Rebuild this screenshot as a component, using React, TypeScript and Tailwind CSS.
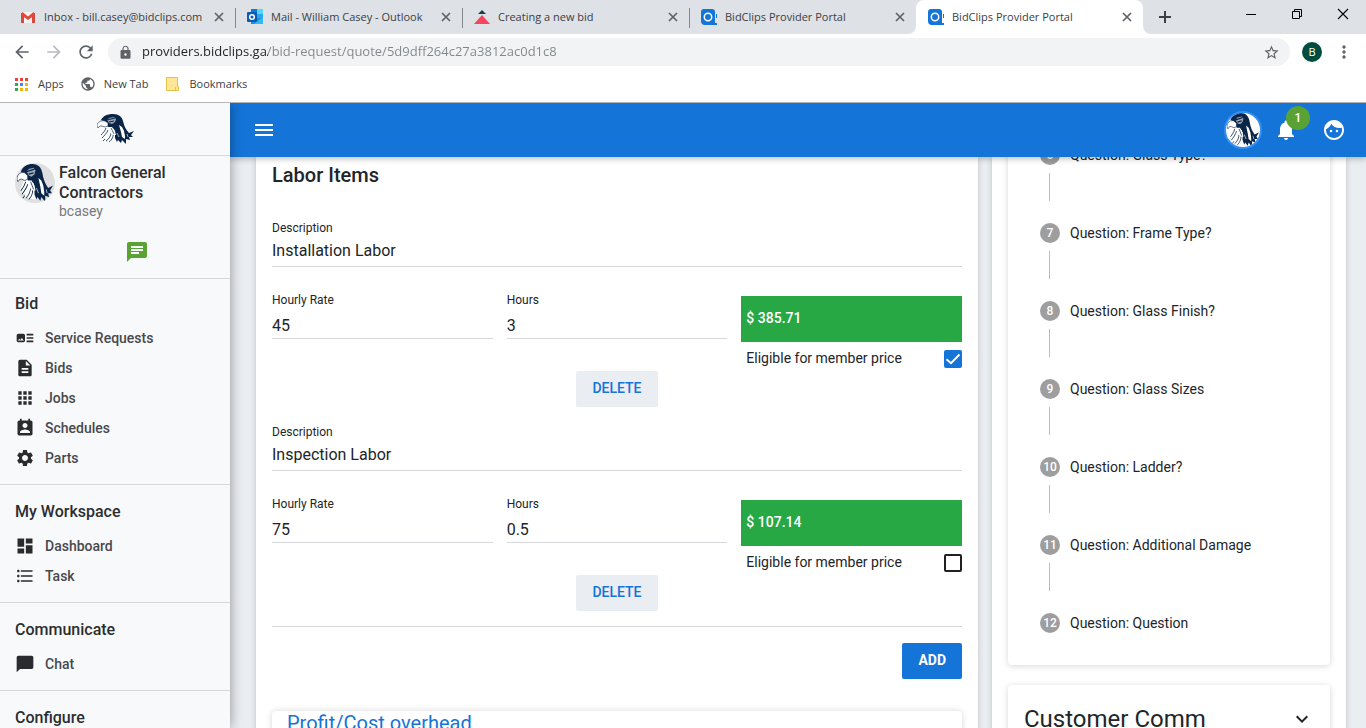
import { useState, type ReactNode } from "react";
import type { IconType } from "react-icons";
import {
  MdApps,
  MdArrowBack,
  MdArrowForward,
  MdArtTrack,
  MdChat,
  MdChatBubble,
  MdDashboard,
  MdDescription,
  MdFace,
  MdFormatListBulleted,
  MdKeyboardArrowDown,
  MdLock,
  MdMenu,
  MdMoreVert,
  MdNotifications,
  MdPermContactCalendar,
  MdPublic,
  MdRefresh,
  MdSettings,
  MdStarBorder,
} from "react-icons/md";

const sections: { title: string; items: { label: string; icon: IconType }[] }[] = [
  {
    title: "Bid",
    items: [
      { label: "Service Requests", icon: MdArtTrack },
      { label: "Bids", icon: MdDescription },
      { label: "Jobs", icon: MdApps },
      { label: "Schedules", icon: MdPermContactCalendar },
      { label: "Parts", icon: MdSettings },
    ],
  },
  {
    title: "My Workspace",
    items: [
      { label: "Dashboard", icon: MdDashboard },
      { label: "Task", icon: MdFormatListBulleted },
    ],
  },
  { title: "Communicate", items: [{ label: "Chat", icon: MdChatBubble }] },
  { title: "Configure", items: [] },
];

const steps = [
  { n: 6, label: "Question: Glass Type?" },
  { n: 7, label: "Question: Frame Type?" },
  { n: 8, label: "Question: Glass Finish?" },
  { n: 9, label: "Question: Glass Sizes" },
  { n: 10, label: "Question: Ladder?" },
  { n: 11, label: "Question: Additional Damage" },
  { n: 12, label: "Question: Question" },
];

const laborItems = [
  { description: "Installation Labor", rate: "45", hours: "3", total: "$ 385.71", eligible: true },
  { description: "Inspection Labor", rate: "75", hours: "0.5", total: "$ 107.14", eligible: false },
];

function Falcon({ className }: { className: string }) {
  return (
    <svg viewBox="0 0 37 30" preserveAspectRatio="none" className={className} aria-hidden="true">
      {/* breast feathers */}
      <path d="M7 13 12 12 19 15 21 27 17 28 14 27 12 29 11 26 7 27 9 23 4 24 6 20 3 20 6 16Z" fill="#fff" />
      <path
        d="M9 14C8 17 6 19 4 21M11 16C10 19 7 22 5 24M9 27C12 25 14 22 14 18M12 28C15 26 17 22 16 18M8 25 6 27"
        fill="none"
        stroke="#0a2548"
        strokeWidth="0.8"
      />
      {/* head, nape and back */}
      <path
        d="M4 6C6 2 10 0 16 0 22 0 25 3 26 7 27 12 29 16 32 19L37 17 34 21 36 23 32 23 33 26 29 25 29 30 25 26 24 29 21 26 20 28 18 24 18 19 17 15 12 14 10 11 8 8Z"
        fill="#0a2548"
      />
      {/* beak */}
      <path
        d="M0 12C0 8 4 6 8 7L11 9 11 12 8 13 5 12 3 12 1 14Z"
        fill="#fff"
        stroke="#0a2548"
        strokeWidth="0.6"
      />
      {/* cheek */}
      <path d="M11 13 15 13 18 17 19 21 16 21 12 18Z" fill="#fff" />
      <path d="M14 14 17 20" stroke="#0a2548" strokeWidth="0.7" />
      {/* eye patch */}
      <path d="M10 6 12 4 17 3 19 5 18 8 15 10 12 9Z" fill="#9aa8b6" />
      <path d="M10 6 18 4M12 8 17 7" stroke="#0a2548" strokeWidth="1.1" />
      {/* wing stripe */}
      <path d="M22 11 25 13 27 17 28 22 28 25 25 23 24 18Z" fill="#fff" />
      <path d="M30 20 31 23M20 19 22 23" stroke="#fff" strokeWidth="0.6" />
    </svg>
  );
}

function GmailIcon() {
  return (
    <svg viewBox="0 0 16 16" className="size-4" aria-hidden="true">
      <path d="M1 3h14v11H1z" fill="#f2f2f2" />
      <path d="M1 14V4l3 2v8zM12 14V6l3-2v10z" fill="#d54b3d" />
      <path d="M1 4.500 2.500 3 8 7.500 13.500 3 15 4.500V6L8 11 1 6z" fill="#e0493b" />
    </svg>
  );
}

function OutlookIcon() {
  return (
    <svg viewBox="0 0 16 16" className="size-4" aria-hidden="true">
      <path d="M4 0h12v13H4z" fill="#28a8ea" />
      <path d="M10 0h6v5h-6z" fill="#50d9ff" />
      <path d="M4 0h6v5H4z" fill="#0f78d4" />
      <path d="M4 9h12v6H4z" fill="#1490df" />
      <path d="M16 8v7H7z" fill="#35b8f1" />
      <rect y="3" width="10" height="10" rx="1" fill="#0a5cb2" />
      <circle cx="5" cy="8" r="2.300" fill="none" stroke="#fff" strokeWidth="1.500" />
    </svg>
  );
}

function TriangleIcon() {
  return (
    <svg viewBox="0 0 16 16" className="size-4" aria-hidden="true">
      <path d="M8 1 12 5H4z" fill="#173f4a" />
      <path d="M8 6 16 15H0z" fill="#f4465e" />
    </svg>
  );
}

function BidClipsIcon() {
  return (
    <svg viewBox="0 0 16 16" className="size-4" aria-hidden="true">
      <path d="M3 0h8a3 3 0 0 1 3 3v11h2v2H4a4 4 0 0 1-4-4V3a3 3 0 0 1 3-3z" fill="#1474d8" />
      <path d="M15 5h1v4h-1z" fill="#1474d8" />
      <circle cx="7" cy="8" r="3.700" fill="none" stroke="#fff" strokeWidth="1.500" />
    </svg>
  );
}

const tabs: { title: string; icon: ReactNode; active?: boolean }[] = [
  { title: "Inbox - bill.casey@bidclips.com", icon: <GmailIcon /> },
  { title: "Mail - William Casey - Outlook", icon: <OutlookIcon /> },
  { title: "Creating a new bid", icon: <TriangleIcon /> },
  { title: "BidClips Provider Portal", icon: <BidClipsIcon /> },
  { title: "BidClips Provider Portal", icon: <BidClipsIcon />, active: true },
];

function TabStrip() {
  return (
    <div className="flex h-[34px] items-stretch bg-[#dee1e6] pl-2">
      {tabs.map((tab, i) => (
        <div
          key={i}
          className={
            tab.active
              ? "relative flex w-[227px] min-w-0 items-center rounded-t-lg bg-white pr-2.5 pl-3"
              : "relative flex w-[227px] min-w-0 items-center pr-2.5 pl-3"
          }
        >
          {i > 0 && !tab.active && <span className="absolute top-2 left-0 h-5 w-px bg-[#85888d]" />}
          {tab.active && (
            <>
              <svg viewBox="0 0 8 8" className="absolute bottom-0 -left-2 size-2" aria-hidden="true">
                <path d="M8 0v8H0a8 8 0 0 0 8-8z" fill="#fff" />
              </svg>
              <svg viewBox="0 0 8 8" className="absolute -right-2 bottom-0 size-2" aria-hidden="true">
                <path d="M0 0v8h8a8 8 0 0 1-8-8z" fill="#fff" />
              </svg>
            </>
          )}
          {tab.icon}
          <span className="ml-2 flex-1 overflow-hidden text-[11px] whitespace-nowrap text-[#3c4043]">
            {tab.title}
          </span>
          <button type="button" aria-label="Close tab" className="ml-1 text-[#5f6368]">
            <svg viewBox="0 0 12 12" className="size-3" aria-hidden="true">
              <path d="M2 2 10 10M10 2 2 10" stroke="currentColor" strokeWidth="1.700" />
            </svg>
          </button>
        </div>
      ))}
      <button type="button" aria-label="New tab" className="ml-[15px] text-[#3c4043]">
        <svg viewBox="0 0 14 14" className="size-3.5" aria-hidden="true">
          <path d="M7 1v12M1 7h12" stroke="currentColor" strokeWidth="2" />
        </svg>
      </button>
      <div className="ml-auto flex items-start gap-[34px] pt-2 pr-[17px] text-black">
        <button type="button" aria-label="Minimize">
          <svg viewBox="0 0 12 12" className="size-3" aria-hidden="true">
            <path d="M1 6.500h10" stroke="currentColor" />
          </svg>
        </button>
        <button type="button" aria-label="Restore">
          <svg viewBox="0 0 12 12" className="size-3" aria-hidden="true">
            <path d="M1.500 3.500h7v7h-7zM3.500 3.500v-2h7v7h-2" fill="none" stroke="currentColor" />
          </svg>
        </button>
        <button type="button" aria-label="Close">
          <svg viewBox="0 0 12 12" className="size-3" aria-hidden="true">
            <path d="M1 1 11 11M11 1 1 11" stroke="currentColor" strokeWidth="1.100" />
          </svg>
        </button>
      </div>
    </div>
  );
}

function BrowserChrome() {
  return (
    <div className="relative z-30 shrink-0 border-b border-[#b6b6b6] bg-white font-['Open_Sans','Noto_Sans',sans-serif]">
      <TabStrip />
      <div className="flex h-9 items-center pr-3 pl-3 text-[#5f6368]">
        <button type="button" aria-label="Back">
          <MdArrowBack size={20} />
        </button>
        <button type="button" aria-label="Forward" className="ml-3 text-[#b9bbbe]">
          <MdArrowForward size={20} />
        </button>
        <button type="button" aria-label="Reload" className="ml-3">
          <MdRefresh size={20} />
        </button>
        <div className="ml-3 flex h-7 flex-1 items-center rounded-full bg-[#f1f3f4] pr-2.5 pl-2.5">
          <MdLock size={15} />
          <input
            type="text"
            aria-label="Address"
            defaultValue="providers.bidclips.ga/bid-request/quote/5d9dff264c27a3812ac0d1c8"
            className="ml-[9px] min-w-0 flex-1 bg-linear-[to_right,#202124_126px,#80868b_126px] bg-clip-text text-[13px] text-transparent outline-none"
          />
          <button type="button" aria-label="Bookmark this page">
            <MdStarBorder size={17} />
          </button>
        </div>
        <button
          type="button"
          aria-label="Profile"
          className="ml-3 flex size-5 items-center justify-center rounded-full bg-[#004d40] text-[11px] text-white"
        >
          B
        </button>
        <button type="button" aria-label="Menu" className="ml-3">
          <MdMoreVert size={20} />
        </button>
      </div>
      <div className="flex h-8 items-center pb-1 pl-[15px] text-[11px] text-[#3c4043]">
        <a href="#apps" className="flex items-center gap-2.5">
          <svg viewBox="0 0 13 13" className="size-[13px]" aria-hidden="true">
            <path d="M0 0h3v3H0zM5 0h3v3H5zM10 0h3v3h-3z" fill="#ea4335" />
            <path d="M0 5h3v3H0zM0 10h3v3H0z" fill="#34a853" />
            <path d="M5 5h3v3H5z" fill="#4285f4" />
            <path d="M10 5h3v3h-3zM5 10h3v3H5zM10 10h3v3h-3z" fill="#f4b400" />
          </svg>
          Apps
        </a>
        <a href="#new-tab" className="ml-4 flex items-center gap-2">
          <MdPublic size={16} className="text-[#5f6368]" />
          New Tab
        </a>
        <a href="#bookmarks" className="ml-[18px] flex items-center gap-2.5">
          <svg viewBox="0 0 13 14" className="h-3.5 w-[13px]" aria-hidden="true">
            <path d="M.5.5h11v9h1v4H.5z" fill="#ffe596" stroke="#e8c34a" />
            <path d="M9.500 10v3.500" stroke="#e8c34a" />
          </svg>
          Bookmarks
        </a>
      </div>
    </div>
  );
}

function Sidebar() {
  return (
    <aside className="relative z-20 w-[230px] shrink-0 overflow-hidden bg-[#f8f9fb] text-[#2c2d30] shadow-[0_0_12px_rgba(0,0,0,0.4)]">
      <div className="flex h-[53px] items-center justify-center border-b border-[#d6d9dc]">
        <Falcon className="h-[30px] w-[37px]" />
      </div>
      <div className="border-b border-[#d6d9dc] pt-[7px] pb-[14px]">
        <div className="flex gap-1 pr-8 pl-[15px]">
          <div className="flex size-10 shrink-0 items-center justify-center overflow-hidden rounded-full bg-[#dfdfdf]">
            <Falcon className="h-[38px] w-9" />
          </div>
          <div>
            <p className="text-[16px] leading-5 font-medium">Falcon General Contractors</p>
            <p className="text-[14px] leading-[17px] text-[#77797c]">bcasey</p>
          </div>
        </div>
        <div className="mt-5 flex justify-center pl-11">
          <button type="button" aria-label="Messages" className="text-[#5aa233]">
            <MdChat size={24} />
          </button>
        </div>
      </div>
      <nav>
        {sections.map((section) => (
          <div
            key={section.title}
            className="border-b border-[#d6d9dc] pt-[15px] pb-[11px] pl-[15px] first:pt-[13px]"
          >
            <h2 className="text-[16px] leading-6 font-medium">{section.title}</h2>
            <ul className="pt-[7px]">
              {section.items.map(({ label, icon: Icon }) => (
                <li key={label}>
                  <a href="#nav" className="flex h-[30px] items-center gap-[10px] text-[14px] font-medium text-[#48494c]">
                    <Icon size={20} className="text-[#2a2b2e]" />
                    {label}
                  </a>
                </li>
              ))}
            </ul>
          </div>
        ))}
      </nav>
    </aside>
  );
}

function Header() {
  return (
    <header className="relative z-10 flex h-[54px] shrink-0 items-center bg-[#1474d8] pr-5 pl-[22px] text-white shadow-[0_2px_6px_rgba(0,0,0,0.25)]">
      <button type="button" aria-label="Toggle menu">
        <MdMenu size={24} />
      </button>
      <div className="ml-auto flex items-center">
        <div className="flex size-[38px] items-center justify-center overflow-hidden rounded-full border-2 border-[#3390f2] bg-white">
          <Falcon className="h-[34px] w-8" />
        </div>
        <button type="button" aria-label="Notifications" className="relative ml-3">
          <MdNotifications size={24} />
          <span className="absolute -top-3 left-3 flex size-6 items-center justify-center rounded-full bg-[#5aa233] text-[12px] font-medium">
            1
          </span>
        </button>
        <button type="button" aria-label="Account" className="ml-6">
          <MdFace size={24} />
        </button>
      </div>
    </header>
  );
}

function LaborItem({ item, id }: { item: (typeof laborItems)[number]; id: string }) {
  const [eligible, setEligible] = useState(item.eligible);

  return (
    <div className="flex flex-col">
      <label htmlFor={`${id}-description`} className="text-[12px] leading-4">
        Description
      </label>
      <input
        id={`${id}-description`}
        defaultValue={item.description}
        className="mt-0.5 h-[29px] border-b border-[#d5d7da] pb-1 text-[16px] outline-none"
      />
      <div className="mt-[25px] grid grid-cols-3 gap-[14px]">
        <div className="flex flex-col">
          <label htmlFor={`${id}-rate`} className="text-[12px] leading-4">
            Hourly Rate
          </label>
          <input
            id={`${id}-rate`}
            defaultValue={item.rate}
            className="mt-1 h-[27px] w-full border-b border-[#d5d7da] text-[16px] outline-none"
          />
        </div>
        <div className="flex flex-col">
          <label htmlFor={`${id}-hours`} className="text-[12px] leading-4">
            Hours
          </label>
          <input
            id={`${id}-hours`}
            defaultValue={item.hours}
            className="mt-1 h-[27px] w-full border-b border-[#d5d7da] text-[16px] outline-none"
          />
        </div>
        <div className="pt-1">
          <div className="flex h-[46px] items-center bg-[#28a745] pb-0.5 pl-[5px] text-[14px] font-medium text-white">
            {item.total}
          </div>
          <div className="mt-2 flex h-[18px] items-center justify-between pl-[5px]">
            <label htmlFor={`${id}-eligible`} className="pb-0.5 text-[14px]">
              Eligible for member price
            </label>
            <span className="relative flex">
              <input
                id={`${id}-eligible`}
                type="checkbox"
                checked={eligible}
                onChange={(e) => setEligible(e.target.checked)}
                className="size-[18px] appearance-none rounded-xs border-2 border-[#212121] checked:border-[#1474d8] checked:bg-[#1474d8]"
              />
              {eligible && (
                <svg viewBox="0 0 18 18" className="pointer-events-none absolute inset-0" aria-hidden="true">
                  <path d="M2.500 9.200 7 13.200 15.500 4.500" fill="none" stroke="#fff" strokeWidth="1.900" />
                </svg>
              )}
            </span>
          </div>
        </div>
      </div>
      <button
        type="button"
        className="mt-[3px] h-9 self-center rounded-xs bg-[#eaedf2] px-4 pb-0.5 text-[14px] font-medium text-[#1474d8]"
      >
        DELETE
      </button>
    </div>
  );
}

function LaborPanel() {
  return (
    <section className="bg-white px-4 pt-1.5 shadow-[0_0_6px_rgba(0,0,0,0.18)]">
      <h1 className="text-[20px] leading-6 font-medium">Labor Items</h1>
      <div className="mt-[33px] flex flex-col gap-[17px]">
        {laborItems.map((item, i) => (
          <LaborItem key={item.description} item={item} id={`labor-${i}`} />
        ))}
      </div>
      <hr className="mt-[15px] border-[#d5d7da]" />
      <div className="mt-4 flex justify-end">
        <button type="button" className="h-9 rounded-xs bg-[#1474d8] px-4 pb-0.5 text-[14px] font-bold text-white">
          ADD
        </button>
      </div>
      <div className="mt-8 h-40 rounded-sm pl-[15px] shadow-[0_0_6px_rgba(0,0,0,0.16)]">
        <h2 className="text-[20px] leading-6 text-[#1474d8]">Profit/Cost overhead</h2>
      </div>
    </section>
  );
}

function StepsPanel() {
  return (
    <section className="bg-white px-4 shadow-[0_0_6px_rgba(0,0,0,0.18)]">
      {/* scrolled part way, so the first step sits under the header */}
      <ol className="-mt-3 rounded-sm pb-8 pl-8 shadow-[0_1px_6px_rgba(0,0,0,0.16)]">
        {steps.map(({ n, label }, i) => (
          <li key={n}>
            <div className="flex h-5 items-center gap-2.5">
              <span className="flex size-5 items-center justify-center rounded-full bg-[#9e9e9e] text-[12px] font-medium text-white">
                {n}
              </span>
              <span className="text-[14px]">{label}</span>
            </div>
            {i < steps.length - 1 && <div className="mt-2 mb-[22px] ml-[9px] h-7 w-px bg-[#bdbdbd]" />}
          </li>
        ))}
      </ol>
      <button
        type="button"
        className="mt-5 flex h-40 w-full items-start justify-between rounded-sm px-4 pt-[18px] text-left shadow-[0_1px_6px_rgba(0,0,0,0.16)]"
      >
        <span className="text-[24px] leading-8">Customer Comm</span>
        <MdKeyboardArrowDown size={24} className="mt-1" />
      </button>
    </section>
  );
}

export default function App() {
  return (
    <div className="flex h-screen flex-col overflow-hidden">
      <BrowserChrome />
      <div className="flex min-h-0 flex-1 font-[Roboto,sans-serif] text-[#212529]">
        <Sidebar />
        <div className="flex min-w-0 flex-1 flex-col">
          <Header />
          <main className="grid min-h-0 flex-1 grid-cols-[722fr_354fr] gap-[14px] overflow-hidden bg-[#eaedf2] pr-5 pl-[26px]">
            <LaborPanel />
            <StepsPanel />
          </main>
        </div>
      </div>
    </div>
  );
}
